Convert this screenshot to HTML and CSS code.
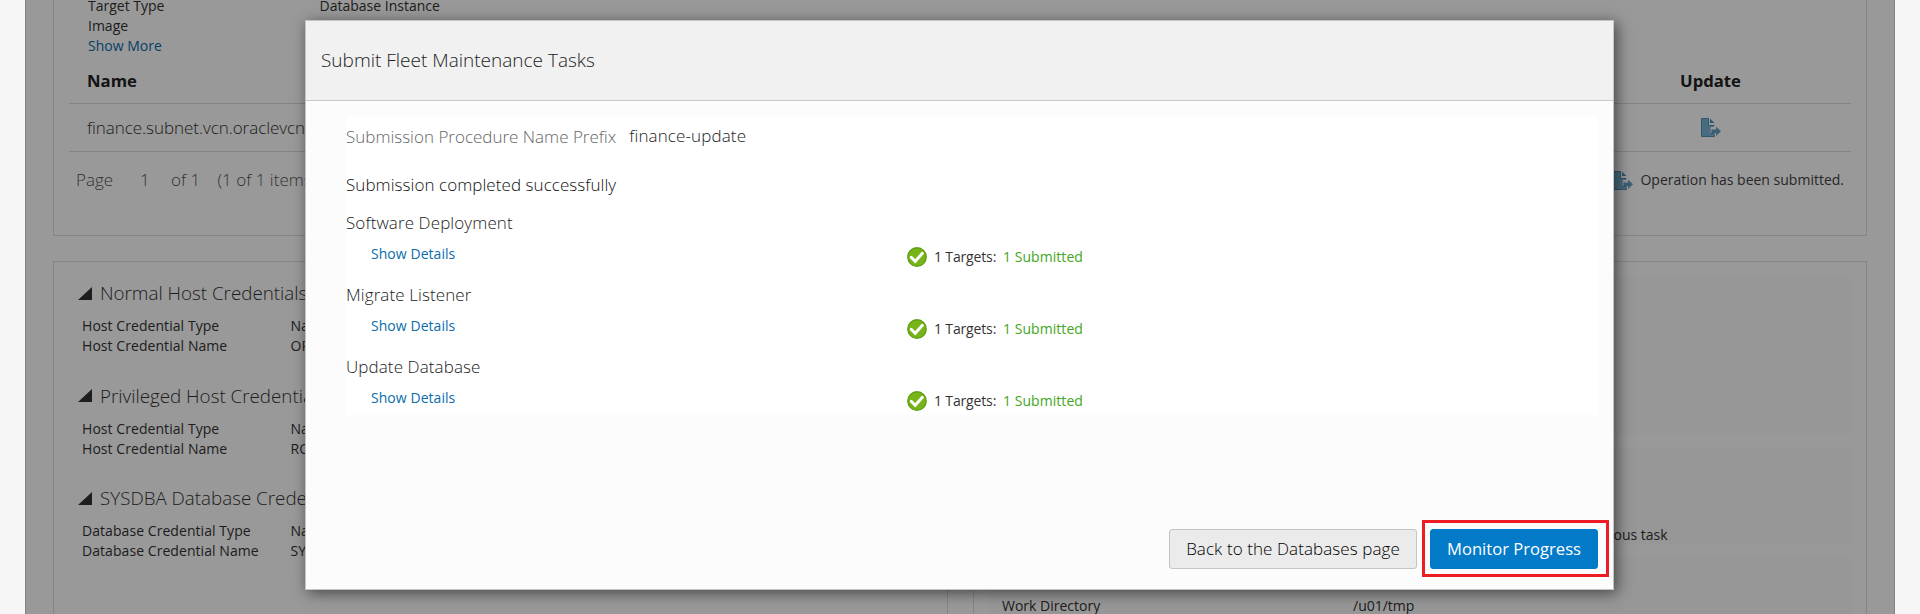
FILE: index.html
```
<!DOCTYPE html>
<html lang="en">
<head>
<meta charset="utf-8">
<title>Submit Fleet Maintenance Tasks</title>
<link rel="stylesheet" href="styles.css">
</head>
<body>
<svg class="defs" width="0" height="0">
  <symbol id="export" viewBox="0 0 20 19">
    <path d="M0 0h8v7h5v2H8.500v7H14v3H0z" fill="#78b4d8"/>
    <path d="M.5.500h7v7H13.500M9 9v6.500H13.500M13.500 18.500H.5V.5" fill="none" stroke="#5890b6"/>
    <path d="M9 .5v4.500h4.500z" fill="#5890b6"/>
    <path d="M10.500 11.500h4.500V8.700l5 4.600-5 4.600v-2.900h-4.500z" fill="#669fc4"/>
  </symbol>
  <symbol id="check" viewBox="0 0 20 20">
    <circle cx="10" cy="10" r="9.900" fill="#5f9c13"/>
    <circle cx="10" cy="10" r="8.700" fill="#76b417"/>
    <path d="M4.200 10.300l4 4L15.400 6.300" fill="none" stroke="#fff" stroke-width="2.900" stroke-linecap="round"/>
  </symbol>
</svg>

<div class="page">
  <section class="card summary">
    <div class="facts">
      <div class="fact"><span>Target Type</span><span>Database Instance</span></div>
      <div class="fact"><span>Image</span></div>
      <div class="fact"><a class="link">Show More</a></div>
    </div>
    <div class="grid-row grid-head"><span>Name</span><span class="update">Update</span></div>
    <div class="grid-row grid-item"><span>finance.subnet.vcn.oraclevcn</span><span class="update"><svg class="export"><use href="#export"/></svg></span></div>
    <div class="pager">
      <span class="pager-label">Page</span><span class="pager-num">1</span><span class="pager-of">of 1</span><span>(1 of 1 items)</span>
      <span class="legend"><svg class="export"><use href="#export"/></svg>Operation has been submitted.</span>
    </div>
  </section>

  <div class="columns">
    <section class="card creds">
      <div class="cred">
        <h3><svg class="tri" viewBox="0 0 14 13"><path d="M14 0v13H0z"/></svg>Normal Host Credentials</h3>
        <div class="pair"><span>Host Credential Type</span><span>Named</span></div>
        <div class="pair"><span>Host Credential Name</span><span>OR</span></div>
      </div>
      <div class="cred">
        <h3><svg class="tri" viewBox="0 0 14 13"><path d="M14 0v13H0z"/></svg>Privileged Host Credentials</h3>
        <div class="pair"><span>Host Credential Type</span><span>Named</span></div>
        <div class="pair"><span>Host Credential Name</span><span>RO</span></div>
      </div>
      <div class="cred">
        <h3><svg class="tri" viewBox="0 0 14 13"><path d="M14 0v13H0z"/></svg>SYSDBA Database Credentials</h3>
        <div class="pair"><span>Database Credential Type</span><span>Named</span></div>
        <div class="pair"><span>Database Credential Name</span><span>SYS</span></div>
      </div>
    </section>
    <section class="card options">
      <div class="block block-a"></div>
      <div class="block block-b"><span class="task">ous task</span></div>
      <div class="block block-c"><span>Work Directory</span><span>/u01/tmp</span></div>
    </section>
  </div>
</div>

<div class="shade"></div>

<div class="dialog">
  <header class="dialog-head">Submit Fleet Maintenance Tasks</header>
  <div class="result">
    <div class="prefix"><span class="prefix-label">Submission Procedure Name Prefix</span><span class="prefix-value">finance-update</span></div>
    <p class="done">Submission completed successfully</p>
    <div class="step">
      <h4>Software Deployment</h4>
      <div class="step-row"><a class="link">Show Details</a><div class="status"><svg class="check"><use href="#check"/></svg><span class="targets">1 Targets:</span><span class="ok">1 Submitted</span></div></div>
    </div>
    <div class="step">
      <h4>Migrate Listener</h4>
      <div class="step-row"><a class="link">Show Details</a><div class="status"><svg class="check"><use href="#check"/></svg><span class="targets">1 Targets:</span><span class="ok">1 Submitted</span></div></div>
    </div>
    <div class="step">
      <h4>Update Database</h4>
      <div class="step-row"><a class="link">Show Details</a><div class="status"><svg class="check"><use href="#check"/></svg><span class="targets">1 Targets:</span><span class="ok">1 Submitted</span></div></div>
    </div>
  </div>
  <footer class="actions">
    <button class="btn">Back to the Databases page</button>
    <span class="marker"><button class="btn primary">Monitor Progress</button></span>
  </footer>
</div>
</body>
</html>
```
FILE: styles.css
```
* { box-sizing: border-box; }
body {
  margin: 0;
  height: 614px;
  overflow: hidden;
  position: relative;
  background: repeating-linear-gradient(45deg, #f9f9f9 0 1.500px, #f3f3f3 1.500px 2.830px);
  font: 400 14px/20px "Open Sans", "Noto Sans", sans-serif;
  color: #333;
  white-space: nowrap;
}
.defs { position: absolute; }
svg { flex: none; display: block; }
.link { color: #0b6cab; }

.page {
  width: 1870px;
  height: 614px;
  margin-left: 25px;
  padding: 0 27px;
  overflow: hidden;
  background: #fff;
  border: solid #d9d9d9;
  border-width: 0 1px;
}
.card { border: 1px solid #dfdfdf; }
.summary {
  height: 236px;
  border-top: 0;
  padding: 0 15px;
}
.facts { display: flow-root; padding-left: 19px; height: 56px; }
.fact { height: 20px; display: grid; grid-template-columns: 231.500px auto; }
.fact:first-child { height: 16px; line-height: 12px; }
.grid-row {
  display: flex;
  justify-content: space-between;
  align-items: center;
  padding-left: 18px;
  border-bottom: 1px solid #dcdcdc;
}
.grid-head { height: 48px; padding-top: 2px; font-size: 16.700px; font-weight: 700; color: #222; }
.grid-item { height: 48px; font-size: 17px; font-weight: 300; letter-spacing: -.05px; }
.update { width: 281px; display: flex; justify-content: center; }
.export { width: 20px; height: 19px; }
.grid-item .export { margin-top: -1px; }
.pager {
  height: 56px;
  display: flex;
  align-items: center;
  padding: 0 7px;
  font-size: 17px;
  font-weight: 300;
  color: #555;
}
.pager-label { width: 64px; }
.pager-num { width: 31px; }
.pager-of { width: 46.500px; }
.legend {
  margin-left: auto;
  display: flex;
  align-items: center;
  gap: 7px;
  font-size: 14px;
  font-weight: 400;
  color: #444;
}
.columns {
  display: grid;
  grid-template-columns: 895px 894px;
  gap: 25px;
  margin-top: 25px;
}
.creds { height: 400px; padding: 17px 15px 0 24px; letter-spacing: .06px; }
.cred { height: 102.500px; }
.cred h3 {
  display: flex;
  align-items: center;
  gap: 8px;
  height: 28px;
  margin: 0;
  font-size: 18.800px;
  font-weight: 300;
  letter-spacing: 0;
}
.tri { width: 14px; height: 13px; fill: #333; }
.pair { height: 20px; display: grid; grid-template-columns: 208.500px auto; padding-left: 4px; }
.pair:nth-child(2) { margin-top: 9px; }
.options { height: 400px; padding: 15px 15px 0; }
.block { background: #fcfcfc; }
.block-a { height: 157px; margin-bottom: 13px; }
.block-b { height: 98px; margin-bottom: 12px; display: flex; align-items: flex-end; }
.task { margin-left: 624.500px; }
.block-c { height: 60px; display: grid; grid-template-columns: 351px auto; padding: 39px 0 0 13px; }

.shade {
  position: absolute;
  left: 25px;
  top: 0;
  width: 1870px;
  height: 614px;
  background: rgba(0, 0, 0, .4);
}

.dialog {
  position: absolute;
  left: 305px;
  top: 20px;
  width: 1309px;
  height: 570px;
  display: flex;
  flex-direction: column;
  background: #fcfcfc;
  border: 1px solid #c4c4c4;
  box-shadow: 3px 3px 14px rgba(0, 0, 0, .55);
}
.dialog-head {
  height: 80px;
  padding: 0 15px;
  line-height: 79px;
  font-size: 19px;
  font-weight: 300;
  color: #222;
  background: #f1f1f1;
  border-bottom: 1px solid #c8c8c8;
}
.result {
  width: 1252px;
  height: 299px;
  margin: 15px 0 0 40px;
  background: #fff;
  font-size: 17px;
  font-weight: 300;
}
.prefix { display: flex; gap: 13px; padding-top: 11px; height: 48px; }
.prefix-label { color: #666; }
.prefix-value { margin-top: -1px; letter-spacing: .12px; color: #222; }
.done { margin: 0; height: 49px; line-height: 42px; letter-spacing: .06px; color: #111; }
.step { height: 72px; }
.step h4 { margin: 0; height: 31px; line-height: 20px; font-size: 17px; font-weight: 300; letter-spacing: .1px; color: #222; }
.step-row {
  display: grid;
  grid-template-columns: 536px auto;
  padding-left: 25px;
  font-size: 14px;
  font-weight: 400;
  letter-spacing: .05px;
}
.status { display: flex; align-items: center; height: 28px; margin-top: -1px; }
.check { width: 20px; height: 20px; margin-top: -1px; }
.targets { margin-left: 7px; width: 69px; letter-spacing: -.15px; }
.ok { color: #42a61c; }
.actions {
  margin: auto 4px 12px 0;
  display: flex;
  justify-content: flex-end;
  align-items: center;
  gap: 5px;
}
.btn {
  display: block;
  width: 248px;
  height: 40px;
  padding: 0;
  border: 1px solid #c4c4c4;
  border-radius: 3px;
  background: #ebebeb;
  font: 300 17px/36px "Open Sans", "Noto Sans", sans-serif;
  letter-spacing: .08px;
  color: #000;
}
.primary {
  width: 168px;
  border-color: #0279c7;
  background: #037bc9;
  color: #fff;
  font-weight: 400;
  font-size: 16.600px;
  letter-spacing: 0;
}
.marker { width: 187px; height: 57px; padding: 6px 5px; border: 3px solid #ee1c24; }
```
